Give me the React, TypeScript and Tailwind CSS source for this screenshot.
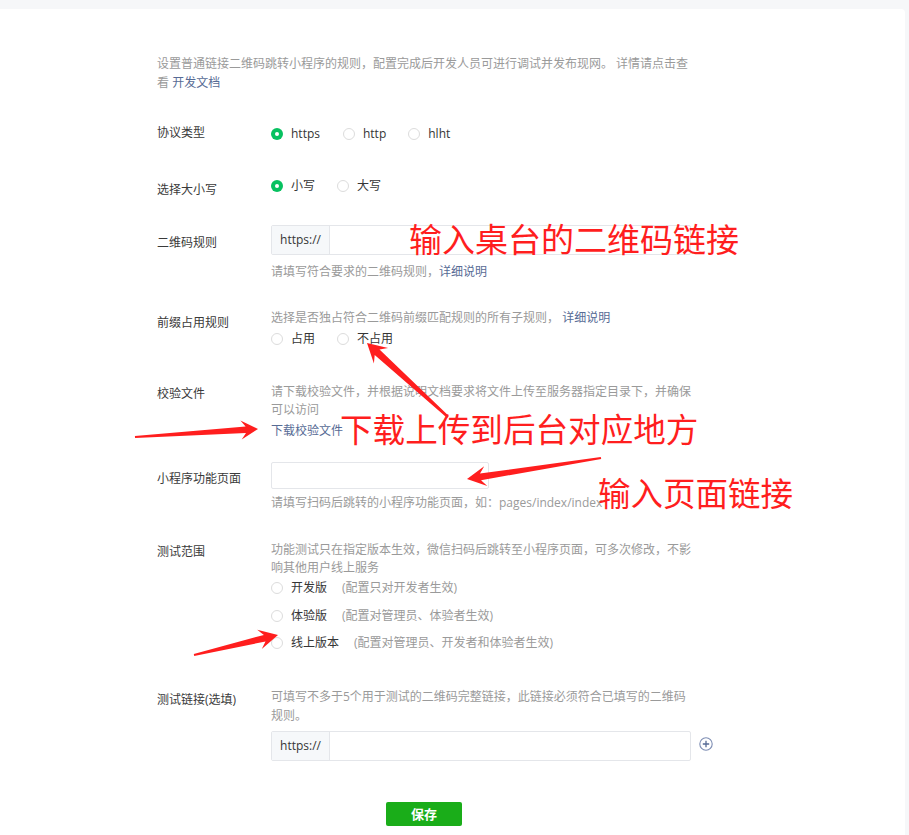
import React from "react";

const FONT = { fontFamily: '"Open Sans","Noto Sans CJK SC",sans-serif' } as React.CSSProperties;

function Radio({ checked, label, hint, className = "" }: { checked?: boolean; label: string; hint?: string; className?: string }) {
  return (
    <div className={`flex items-center h-[18px] ${className}`}>
      {checked ? (
        <span className="w-[12px] h-[12px] rounded-full bg-[#07c160] flex items-center justify-center shrink-0">
          <span className="w-[4px] h-[4px] rounded-full bg-white" />
        </span>
      ) : (
        <span className="w-[12px] h-[12px] rounded-full border border-[#dcdcdc] bg-white shrink-0" />
      )}
      <span className="ml-[8px] text-[12px] leading-[18px] text-[#353535] whitespace-nowrap">{label}</span>
      {hint && <span className="ml-[15px] text-[12px] leading-[18px] text-[#9a9a9a] whitespace-nowrap">{hint}</span>}
    </div>
  );
}

function Row({ label, labelShift, mt, children }: { label: string; labelShift: string; mt: string; children: React.ReactNode }) {
  return (
    <div className={`flex ${mt}`}>
      <div className={`w-[114px] h-[18px] shrink-0 text-[12px] leading-[18px] text-[#3a3a3a] whitespace-nowrap ${labelShift}`}>{label}</div>
      <div className="w-[420px]">{children}</div>
    </div>
  );
}

type Pt = [number, number];
function arrowPoints(t: Pt, p: Pt, H = 17, W = 9.5, w0 = 1, w1 = 3): string {
  const dx = p[0] - t[0];
  const dy = p[1] - t[1];
  const len = Math.hypot(dx, dy);
  const ux = dx / len;
  const uy = dy / len;
  const nx = -uy;
  const ny = ux;
  const notch: Pt = [p[0] - ux * H * 0.72, p[1] - uy * H * 0.72];
  const base: Pt = [p[0] - ux * H, p[1] - uy * H];
  const pts: Pt[] = [
    [t[0] + nx * w0, t[1] + ny * w0],
    [notch[0] + nx * w1, notch[1] + ny * w1],
    [base[0] + nx * W, base[1] + ny * W],
    p,
    [base[0] - nx * W, base[1] - ny * W],
    [notch[0] - nx * w1, notch[1] - ny * w1],
    [t[0] - nx * w0, t[1] - ny * w0],
  ];
  return pts.map((q) => `${q[0].toFixed(1)},${q[1].toFixed(1)}`).join(" ");
}

export default function App() {
  const gray = "text-[#9a9a9a]";
  const link = "text-[#576b95]";
  return (
    <div className="relative w-[909px] min-h-[835px] bg-[#f6f7f9] pt-[9px] pr-[4px] overflow-hidden" style={FONT}>
      <div className="bg-white min-h-[826px] rounded-tr-[4px] pl-[157px] pt-[45px] pb-[8px]">
        {/* intro */}
        <div className={`w-[536px] text-[12px] leading-[19px] ${gray}`}>
          设置普通链接二维码跳转小程序的规则，配置完成后开发人员可进行调试并发布现网。 详情请点击查看 <span className={link}>开发文档</span>
        </div>

        {/* 协议类型 */}
        <Row label="协议类型" labelShift="translate-y-[-1px]" mt="mt-[33px]">
          <div className="flex">
            <Radio checked label="https" className="mr-[23px]" />
            <Radio label="http" className="mr-[22px]" />
            <Radio label="hlht" />
          </div>
        </Row>

        {/* 选择大小写 */}
        <Row label="选择大小写" labelShift="translate-y-[4px]" mt="mt-[34px]">
          <div className="flex">
            <Radio checked label="小写" className="mr-[22px]" />
            <Radio label="大写" />
          </div>
        </Row>

        {/* 二维码规则 */}
        <Row label="二维码规则" labelShift="translate-y-[9px]" mt="mt-[30px]">
          <div className="flex h-[30px] w-[420px] border border-[#e4e6ea] rounded-[2px] bg-white">
            <div className="w-[58px] shrink-0 bg-[#f6f8fa] border-r border-[#e4e6ea] flex items-center justify-center text-[12px] text-[#353535]">https://</div>
            <div className="flex-1" />
          </div>
          <div className={`mt-[8px] text-[12px] leading-[18px] ${gray}`}>
            请填写符合要求的二维码规则，<span className={link}>详细说明</span>
          </div>
        </Row>

        {/* 前缀占用规则 */}
        <Row label="前缀占用规则" labelShift="translate-y-[5px]" mt="mt-[28px]">
          <div className={`text-[12px] leading-[18px] ${gray}`}>
            选择是否独占符合二维码前缀匹配规则的所有子规则， <span className={link}>详细说明</span>
          </div>
          <div className="flex mt-[3px]">
            <Radio label="占用" className="mr-[22px]" />
            <Radio label="不占用" />
          </div>
        </Row>

        {/* 校验文件 */}
        <Row label="校验文件" labelShift="translate-y-[2px]" mt="mt-[35px]">
          <div className={`text-[12px] leading-[18px] ${gray}`}>
            请下载校验文件，并根据说明文档要求将文件上传至服务器指定目录下，并确保可以访问
          </div>
          <div className={`mt-[3px] text-[12px] leading-[18px] ${link}`}>下载校验文件</div>
        </Row>

        {/* 小程序功能页面 */}
        <Row label="小程序功能页面" labelShift="translate-y-[8px]" mt="mt-[22px]">
          <div className="h-[27px] w-[218px] border border-[#e4e6ea] rounded-[2px] bg-white" />
          <div className={`mt-[5px] text-[12px] leading-[18px] ${gray} whitespace-nowrap`}>
            请填写扫码后跳转的小程序功能页面，如：pages/index/index
          </div>
        </Row>

        {/* 测试范围 */}
        <Row label="测试范围" labelShift="translate-y-[2px]" mt="mt-[29px]">
          <div className={`text-[12px] leading-[18px] ${gray}`}>
            功能测试只在指定版本生效，微信扫码后跳转至小程序页面，可多次修改，不影响其他用户线上服务
          </div>
          <div className="flex flex-col gap-[9.5px] mt-[2px]">
            <Radio label="开发版" hint="(配置只对开发者生效)" />
            <Radio label="体验版" hint="(配置对管理员、体验者生效)" />
            <Radio label="线上版本" hint="(配置对管理员、开发者和体验者生效)" />
          </div>
        </Row>

        {/* 测试链接 */}
        <Row label="测试链接(选填)" labelShift="translate-y-[3px]" mt="mt-[36px]">
          <div className={`text-[12px] leading-[18.5px] ${gray}`}>
            可填写不多于5个用于测试的二维码完整链接，此链接必须符合已填写的二维码规则。
          </div>
          <div className="mt-[6px] flex items-center">
            <div className="flex h-[30px] w-[420px] shrink-0 border border-[#e4e6ea] rounded-[2px] bg-white">
              <div className="w-[58px] shrink-0 bg-[#f6f8fa] border-r border-[#e4e6ea] flex items-center justify-center text-[12px] text-[#353535]">https://</div>
              <div className="flex-1" />
            </div>
            <svg className="ml-[8px] shrink-0 -translate-y-[2px]" width="14" height="14" viewBox="0 0 14 14">
              <circle cx="7" cy="7" r="6.2" fill="none" stroke="#7d8db3" strokeWidth="1.1" />
              <path d="M7 3.8V10.2M3.8 7H10.2" stroke="#576b95" strokeWidth="1.3" />
            </svg>
          </div>
        </Row>

        {/* save */}
        <div className="w-[534px] flex justify-center mt-[41px]">
          <button className="w-[76px] h-[24px] bg-[#1aad19] rounded-[2px] text-white text-[13px] font-bold leading-[24px]">保存</button>
        </div>
      </div>

      {/* annotations */}
      <svg className="absolute left-0 top-0 pointer-events-none" width="909" height="835">
        <polygon points={arrowPoints([448, 417], [367, 343], 19, 10.5, 1.2, 3.6)} fill="#ff1e1e" />
        <polygon points={arrowPoints([135, 437], [258, 429], 17, 9.5, 1, 3.2)} fill="#ff1e1e" />
        <polygon points={arrowPoints([601, 458], [467, 479], 19, 10, 1, 3.4)} fill="#ff1e1e" />
        <polygon points={arrowPoints([194, 655], [278, 635], 19, 10, 1, 3.4)} fill="#ff1e1e" />
      </svg>
      <span className="absolute left-[409px] top-[223px] text-[33px] leading-[33px] text-[#ff1e1e] whitespace-nowrap">输入桌台的二维码链接</span>
      <span className="absolute left-[340px] top-[413px] text-[32.6px] leading-[33px] text-[#ff1e1e] whitespace-nowrap">下载上传到后台对应地方</span>
      <span className="absolute left-[598px] top-[477px] text-[32.5px] leading-[33px] text-[#ff1e1e] whitespace-nowrap">输入页面链接</span>
    </div>
  );
}
